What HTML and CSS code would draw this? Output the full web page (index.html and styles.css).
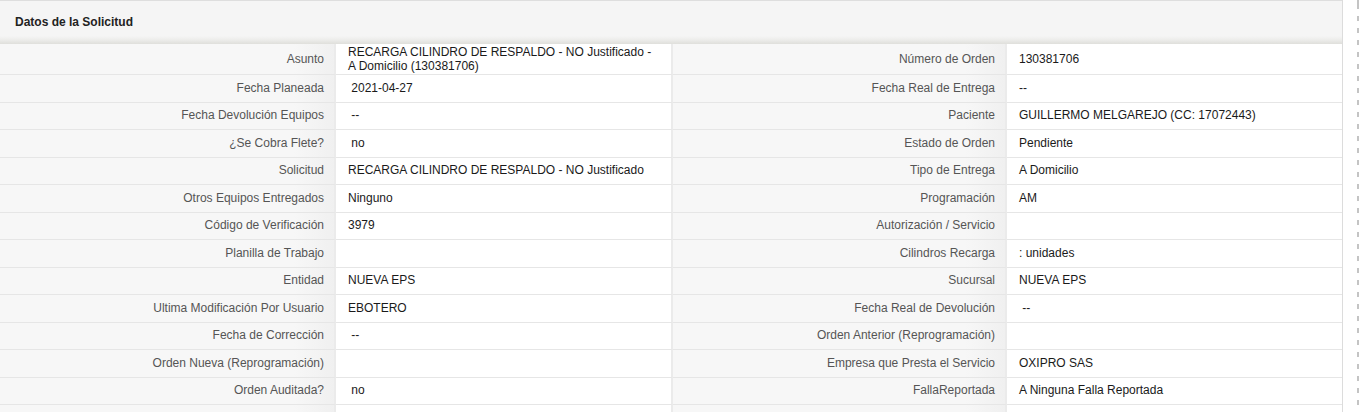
FILE: index.html
```html
<!DOCTYPE html>
<html lang="es">
<head>
<meta charset="utf-8">
<title>Datos de la Solicitud</title>
<link rel="stylesheet" href="styles.css">
</head>
<body>
<div class="page">
  <section class="panel">
    <header class="panel-head">Datos de la Solicitud</header>
    <div class="grid">
      <div class="lbl first">Asunto</div><div class="val first">RECARGA CILINDRO DE RESPALDO - NO Justificado -<br>A Domicilio (130381706)</div>
      <div class="lbl first">Número de Orden</div><div class="val first last">130381706</div>

      <div class="lbl">Fecha Planeada</div><div class="val">&nbsp;2021-04-27</div>
      <div class="lbl">Fecha Real de Entrega</div><div class="val last">--</div>

      <div class="lbl">Fecha Devolución Equipos</div><div class="val">&nbsp;--</div>
      <div class="lbl">Paciente</div><div class="val last">GUILLERMO MELGAREJO (CC: 17072443)</div>

      <div class="lbl">¿Se Cobra Flete?</div><div class="val">&nbsp;no</div>
      <div class="lbl">Estado de Orden</div><div class="val last">Pendiente</div>

      <div class="lbl">Solicitud</div><div class="val">RECARGA CILINDRO DE RESPALDO - NO Justificado</div>
      <div class="lbl">Tipo de Entrega</div><div class="val last">A Domicilio</div>

      <div class="lbl">Otros Equipos Entregados</div><div class="val">Ninguno</div>
      <div class="lbl">Programación</div><div class="val last">AM</div>

      <div class="lbl">Código de Verificación</div><div class="val">3979</div>
      <div class="lbl">Autorización / Servicio</div><div class="val last"></div>

      <div class="lbl">Planilla de Trabajo</div><div class="val"></div>
      <div class="lbl">Cilindros Recarga</div><div class="val last">: unidades</div>

      <div class="lbl">Entidad</div><div class="val">NUEVA EPS</div>
      <div class="lbl">Sucursal</div><div class="val last">NUEVA EPS</div>

      <div class="lbl">Ultima Modificación Por Usuario</div><div class="val">EBOTERO</div>
      <div class="lbl">Fecha Real de Devolución</div><div class="val last">&nbsp;--</div>

      <div class="lbl">Fecha de Corrección</div><div class="val">&nbsp;--</div>
      <div class="lbl">Orden Anterior (Reprogramación)</div><div class="val last"></div>

      <div class="lbl">Orden Nueva (Reprogramación)</div><div class="val"></div>
      <div class="lbl">Empresa que Presta el Servicio</div><div class="val last">OXIPRO SAS</div>

      <div class="lbl">Orden Auditada?</div><div class="val">&nbsp;no</div>
      <div class="lbl">FallaReportada</div><div class="val last">A Ninguna Falla Reportada</div>

      <div class="lbl"></div><div class="val"></div>
      <div class="lbl"></div><div class="val last"></div>
    </div>
  </section>
  <div class="edge"></div>
</div>
</body>
</html>
```

FILE: styles.css
```css
html, body {
  margin: 0;
  padding: 0;
  background: #fff;
}
body {
  font-family: "Liberation Sans", Arial, sans-serif;
  font-size: 12px;
  color: #222;
}
.page {
  display: flex;
  align-items: stretch;
  gap: 14px;
  height: 412px;
  overflow: hidden;
}
.panel {
  width: 1343px;
  flex: none;
  border-right: 1px solid #dcdcdc;
  box-sizing: border-box;
}
.panel-head {
  height: 44px;
  box-sizing: border-box;
  border-top: 1px solid #dedede;
  padding: 0 15px 1px;
  display: flex;
  align-items: center;
  font-weight: bold;
  color: #222;
  background: linear-gradient(to bottom, #f5f5f5 0, #f5f5f5 35px, #ececea 39px, #dfdfdb 43px, #dcdcd8 44px);
}
.grid {
  display: grid;
  grid-template-columns: 336px 337px 334px 1fr;
}
.lbl, .val {
  min-height: 27.5px;
  box-sizing: border-box;
  padding: 1px 12px;
  line-height: 13.5px;
  display: flex;
  align-items: center;
  border-bottom: 1px solid #e6e6e6;
}
.lbl.first, .val.first {
  min-height: 30px;
  padding-top: 2px;
  padding-bottom: 1px;
}
.lbl {
  justify-content: flex-end;
  text-align: right;
  padding-right: 10px;
  color: #555;
  background: linear-gradient(to right, #f7f7f7 0, #f7f7f7 88%, #f0f0f0 100%);
  border-right: 2px solid #ebebeb;
}
.val {
  color: #1a1a1a;
  background: #fff;
  border-right: 2px solid #ebebeb;
}
.val.last {
  border-right: none;
}
.edge {
  width: 2px;
  flex: none;
  background: repeating-linear-gradient(to bottom, #c4c4c4 0, #c4c4c4 5px, transparent 5px, transparent 12px);
  background-position: 0 4px;
}
```
